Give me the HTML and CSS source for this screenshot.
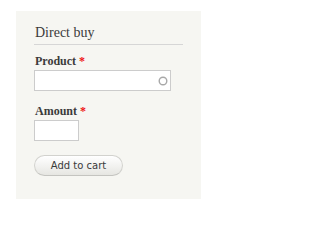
FILE: index.html
```html
<!DOCTYPE html>
<html>
<head>
<meta charset="utf-8">
<link rel="stylesheet" href="styles.css">
</head>
<body>
<div class="block">
  <h2 class="block-title">Direct buy</h2>
  <div class="field first">
    <label class="label">Product <span class="req">*</span></label>
    <div class="input wide">
      <svg class="throbber" width="10" height="10" viewBox="0 0 10 10"><circle cx="5" cy="5" r="3.8" fill="none" stroke="#a8a8a8" stroke-width="1.4"/></svg>
    </div>
  </div>
  <div class="field second">
    <label class="label">Amount <span class="req">*</span></label>
    <div class="input small"></div>
  </div>
  <button class="btn">Add to cart</button>
</div>
</body>
</html>
```
FILE: styles.css
```css
html, body { margin: 0; padding: 0; background: #fff; }
.block {
  box-sizing: border-box;
  margin: 11px 0 0 16px;
  width: 185px;
  height: 188px;
  background: #f6f6f2;
  padding: 13px 18px 0 18px;
}
.block-title {
  margin: 0;
  font-family: "Liberation Serif", serif;
  font-weight: normal;
  font-size: 14px;
  line-height: 18px;
  color: #3b3b3b;
  padding: 0 0 2px 1px;
  border-bottom: 1px solid #d6d6d6;
}
.field { display: flex; flex-direction: column; align-items: flex-start; }
.first { margin-top: 9px; }
.second { margin-top: 13px; }
.label {
  font-family: "Liberation Serif", serif;
  font-weight: bold;
  font-size: 12px;
  line-height: 14px;
  color: #3b3b3b;
  padding-left: 1px;
  margin-bottom: 2px;
}
.req { color: #ee1111; font-weight: bold; }
.input {
  box-sizing: border-box;
  background: #fff;
  border: 1px solid #cccccc;
  height: 21px;
  display: flex;
  align-items: center;
  justify-content: flex-end;
}
.wide { width: 137px; padding-right: 2px; }
.small { width: 45px; }
.btn {
  display: block;
  margin-top: 14px;
  box-sizing: border-box;
  width: 89px;
  height: 21px;
  border: 1px solid #d2d2ce;
  border-bottom-color: #c4c4c0;
  border-radius: 11px;
  background: linear-gradient(#ffffff, #e6e6e2);
  font-family: "DejaVu Sans", sans-serif;
  font-size: 10px;
  color: #3a3a3a;
  padding: 0;
}
```
